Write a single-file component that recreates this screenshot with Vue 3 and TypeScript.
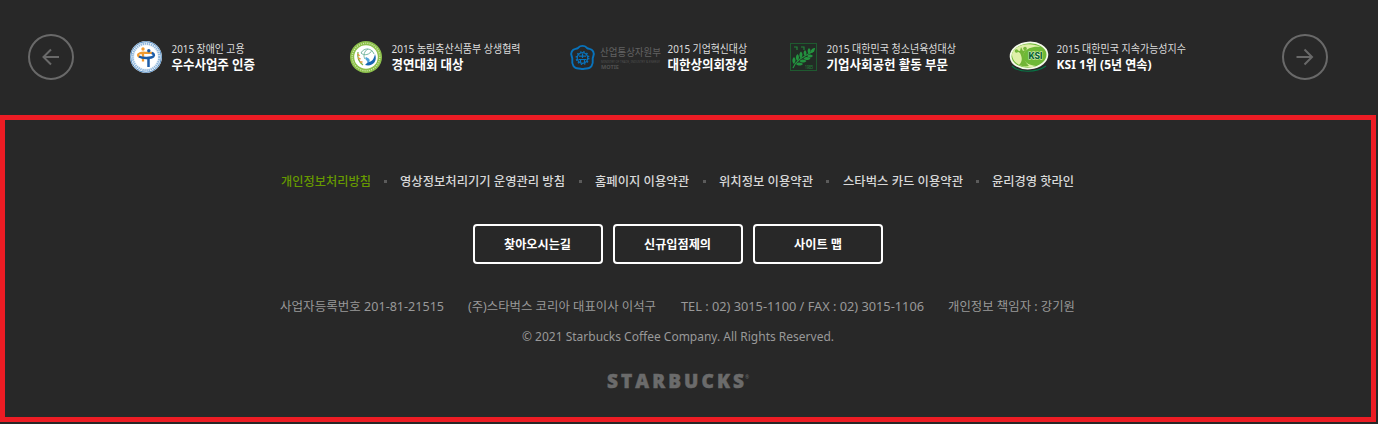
<script setup lang="ts">
interface Award {
  icon: string
  textX: number
  small: string
  smallWidth: number
  big: string
  bigWidth: number
}
interface Line {
  text: string
  width: number
  green?: boolean
}

const awards: Award[] = [
  { icon: 'work', textX: 41.5, small: '2015 장애인 고용', smallWidth: 73, big: '우수사업주 인증', bigWidth: 83.5 },
  { icon: 'farm', textX: 41.5, small: '2015 농림축산식품부 상생협력', smallWidth: 129, big: '경연대회 대상', bigWidth: 72 },
  { icon: 'motie', textX: 97.5, small: '2015 기업혁신대상', smallWidth: 79.5, big: '대한상의회장상', bigWidth: 80.5 },
  { icon: 'youth', textX: 36.5, small: '2015 대한민국 청소년육성대상', smallWidth: 129.5, big: '기업사회공헌 활동 부문', bigWidth: 121.5 },
  { icon: 'ksi', textX: 46.5, small: '2015 대한민국 지속가능성지수', smallWidth: 129.5, big: 'KSI 1위 (5년 연속)', bigWidth: 95 },
]
const links: Line[] = [
  { text: '개인정보처리방침', width: 90, green: true },
  { text: '영상정보처리기기 운영관리 방침', width: 165 },
  { text: '홈페이지 이용약관', width: 94 },
  { text: '위치정보 이용약관', width: 94 },
  { text: '스타벅스 카드 이용약관', width: 120 },
  { text: '윤리경영 핫라인', width: 82 },
]
const buttons: Line[] = [
  { text: '찾아오시는길', width: 67 },
  { text: '신규입점제의', width: 67 },
  { text: '사이트 맵', width: 48 },
]
const company: Line[] = [
  { text: '사업자등록번호 201-81-21515', width: 164 },
  { text: '(주)스타벅스 코리아 대표이사 이석구', width: 188 },
  { text: 'TEL : 02) 3015-1100 / FAX : 02) 3015-1106', width: 243 },
  { text: '개인정보 책임자 : 강기원', width: 127 },
]
const copyright: Line = { text: '© 2021 Starbucks Coffee Company. All Rights Reserved.', width: 312 }
</script>

<template>
  <div class="page">
    <section class="awards">
      <button class="arrow" aria-label="이전">
        <svg width="46" height="46" viewBox="0 0 46 46">
          <circle cx="23" cy="23" r="22" />
          <path d="M31 23H16M23 15.500l-7.500 7.500 7.500 7.500" />
        </svg>
      </button>
      <div class="award-list">
        <svg v-for="a in awards" :key="a.icon" class="award" width="220" height="46" viewBox="0 0 220 46">
          <g v-if="a.icon === 'work'">
            <circle cx="16" cy="23" r="16" fill="#f4f8fb" />
            <circle cx="16" cy="23" r="13.300" fill="none" stroke="#8fb6dc" stroke-width="2.200" stroke-dasharray="1.400 .7" />
            <circle cx="16" cy="23" r="15.400" fill="none" stroke="#3577b8" stroke-width=".8" />
            <circle cx="16" cy="23" r="11.200" fill="#fff" />
            <circle cx="13" cy="15" r="1.700" fill="#f29a2e" />
            <path d="M15 18.800c-4-.3-7 .8-7 2.200 0 .8.800 1.600 2 2M15 18.800h7M13 19v8.500" fill="none" stroke="#f29a2e" stroke-width="2.300" />
            <circle cx="18.800" cy="16.800" r="1.700" fill="#1c5ca8" />
            <path d="M9 22.500c3.500 2 12.500 1.800 14.400-.2 1.200-1.400.2-2.800-1.700-3.300M18.500 23v10" fill="none" stroke="#1c5ca8" stroke-width="2.500" />
          </g>
          <g v-else-if="a.icon === 'farm'">
            <circle cx="16" cy="23" r="16" fill="#8cc04b" />
            <circle cx="16" cy="23" r="13.800" fill="none" stroke="#d5e9b2" stroke-width="1.300" stroke-dasharray="1 1.200" />
            <circle cx="16" cy="23" r="11.800" fill="#fff" />
            <path d="M11 19c3-6 11-5 13 1M11 19c3 3 9 2 11-3M15 25c-2-3-1-8 3-10" fill="none" stroke="#76b8a1" stroke-width="1" />
            <path d="M25 20c3 8-3 13-10 11l3-3c4 0 6-3 7-8z" fill="#1767b2" />
            <path d="M16 23c4 2 5 3 2 6-1-3-4-4-2-6z" fill="#52a5d9" />
            <path d="M8 18c-1 6 1 10 5 13" fill="none" stroke="#79b33f" stroke-width="1.200" />
            <path d="M7.500 20l2 2M8 24l2.500 1M10 28l2.500 0" stroke="#df9a43" stroke-width="1.500" />
          </g>
          <g v-else-if="a.icon === 'motie'">
            <path d="M8.300 13.700C10.500 11.300 14.500 11.300 16.700 13.700C17.700 14.600 18.300 14.700 19.500 14.900C23 15.500 24.500 19 23.400 22C22.700 23.600 22.500 24.300 22.700 26C23.400 30.500 21 34.500 16.700 34.500C15 34.400 14 35 12.500 35C11 35 10 34.400 8.300 34.500C4 34.500 1.600 30.500 2.300 26C2.500 24.300 2.300 23.600 1.600 22C.5 19 2 15.500 5.500 14.900C6.700 14.700 7.300 14.600 8.300 13.700Z" fill="none" stroke="#0873bc" stroke-width="1.900" />
            <circle cx="12.500" cy="24" r="5.300" fill="none" stroke="#0873bc" stroke-width="1.200" />
            <circle cx="12.500" cy="24" r="6.300" fill="none" stroke="#0873bc" stroke-width="1.300" stroke-dasharray="1.500 1.800" />
            <path d="M9 22.200h7M12.500 19.500v4.500M8.500 25.500h8M10.500 25.500v3M14.500 25.500v3" fill="none" stroke="#0873bc" stroke-width="1.200" />
            <text x="30" y="22" class="ministry" textLength="61" lengthAdjust="spacingAndGlyphs">산업통상자원부</text>
            <text x="31" y="28.500" class="tiny" textLength="59" lengthAdjust="spacingAndGlyphs">MINISTRY OF TRADE, INDUSTRY &amp; ENERGY</text>
            <text x="31" y="34.500" class="motie" textLength="18" lengthAdjust="spacingAndGlyphs">MOTIE</text>
          </g>
          <g v-else-if="a.icon === 'youth'">
            <rect x=".5" y="9.500" width="26" height="27" fill="#222b25" stroke="#1f5a30" />
            <path d="M3 34c3-8 10-11 21-17" fill="none" stroke="#23933f" stroke-width="1.200" />
            <g fill="#23933f">
              <path d="M4 30c-3-3-1-6 0-7 2 2 2 4 0 7zM7.500 27c-3-3-1-6 0-7 2 2 2 4 0 7zM11 24.500c-3-3-1-6 0-7 2 2 2 4 0 7zM15 22c-2.500-3-1-5 0-6 2 2 2 4 0 6zM19 20c-2.500-3-1-5 0-6 2 2 2 3 0 6z" />
              <path d="M6 30c3-3 6-1 7 0-2 2-5 2-7 0zM9.500 27c3-3 6-1 7 0-2 2-5 2-7 0zM13.500 24.500c3-3 6-1 7 0-2 2-5 2-7 0zM17 22c3-3 5-1 6 0-2 2-4 2-6 0zM20 19c1-4 3-5 5-5 0 3-2 5-5 5z" />
            </g>
            <path d="M4 13h3v3M11 13h3v3" fill="none" stroke="#23833b" stroke-width="1.200" />
            <text x="15" y="34.500" class="year" textLength="8" lengthAdjust="spacingAndGlyphs">1985</text>
          </g>
          <g v-else>
            <path d="M2 32c7 7 24 7 34 0" fill="none" stroke="#087345" stroke-width="1.200" />
            <ellipse cx="19" cy="21.500" rx="18.400" ry="13" fill="#6eb936" stroke="#f5fae9" stroke-width="1.800" transform="rotate(-5 19 21.500)" />
            <path d="M2 20C4 11 19 7 31 13c-8-1-14 1-17 6-3 6 2 12 12 13-9 4-24-1-24-12z" fill="#dff0a9" />
            <path d="M9 31c4-4 3-8 1-12l-5-3 5 1 1-4 2 4 4-2-3 4c-1 5 1 9 5 13-4 1-7 0-10-1z" fill="#72b536" />
            <circle cx="6.500" cy="17" r="1.800" fill="#76b83b" />
            <circle cx="15" cy="14.500" r="1.800" fill="#76b83b" />
            <text x="18.500" y="24.800" class="ksi" textLength="14" lengthAdjust="spacingAndGlyphs">KSI</text>
          </g>
          <text :x="a.textX" y="19" class="small" :textLength="a.smallWidth" lengthAdjust="spacingAndGlyphs">{{ a.small }}</text>
          <text :x="a.textX" y="35" class="big" :textLength="a.bigWidth" lengthAdjust="spacingAndGlyphs">{{ a.big }}</text>
        </svg>
      </div>
      <button class="arrow" aria-label="다음">
        <svg width="46" height="46" viewBox="0 0 46 46">
          <circle cx="23" cy="23" r="22" />
          <path d="M14.500 23H30M22.500 15.500l7.500 7.500-7.500 7.500" />
        </svg>
      </button>
    </section>

    <footer class="footer">
      <nav class="links">
        <template v-for="(l, i) in links" :key="l.text">
          <i v-if="i" class="dot"></i>
          <svg :width="l.width" height="20" :class="['link', { green: l.green }]">
            <text x="0" y="15" :textLength="l.width" lengthAdjust="spacingAndGlyphs">{{ l.text }}</text>
          </svg>
        </template>
      </nav>
      <div class="buttons">
        <button v-for="b in buttons" :key="b.text" class="btn">
          <svg :width="b.width" height="20">
            <text x="0" y="15" :textLength="b.width" lengthAdjust="spacingAndGlyphs">{{ b.text }}</text>
          </svg>
        </button>
      </div>
      <div class="company">
        <svg v-for="c in company" :key="c.text" :width="c.width" height="20">
          <text x="0" y="15" :textLength="c.width" lengthAdjust="spacingAndGlyphs">{{ c.text }}</text>
        </svg>
      </div>
      <div class="copyright">
        <svg :width="copyright.width" height="20">
          <text x="0" y="15" :textLength="copyright.width" lengthAdjust="spacingAndGlyphs">{{ copyright.text }}</text>
        </svg>
      </div>
      <svg class="brand" width="142" height="20">
        <text x="0" y="16" class="word" textLength="137" lengthAdjust="spacing">STARBUCKS</text>
        <text x="138" y="7" class="reg">®</text>
      </svg>
    </footer>
  </div>
</template>

<style>
body {
  margin: 0;
  background: #282828;
}
</style>

<style scoped>
.page {
  width: 1378px;
  height: 424px;
  overflow: hidden;
  background: #282828;
  font-family: 'Noto Sans', 'Noto Sans CJK KR', sans-serif;
}
svg {
  display: block;
  overflow: visible;
}
button {
  margin: 0;
  padding: 0;
  background: none;
  border: 0;
  font: inherit;
}
.awards {
  box-sizing: border-box;
  height: 115px;
  padding: 34px 50px 0 28px;
  display: flex;
  justify-content: space-between;
}
.arrow {
  width: 46px;
  height: 46px;
}
.arrow svg {
  fill: none;
  stroke: #696969;
  stroke-width: 2;
}
.award-list {
  display: flex;
  width: 1100px;
  margin-right: 52px;
  margin-left: 56px;
  flex: none;
}
.small {
  font-size: 11px;
  fill: #ddd;
}
.big {
  font-size: 13px;
  font-weight: 700;
  fill: #fff;
}
.ministry {
  font-size: 10.500px;
  fill: #626262;
}
.tiny {
  font-size: 3.500px;
  fill: #505050;
}
.motie {
  font-size: 6px;
  font-weight: 700;
  fill: #505050;
}
.year {
  font-size: 5px;
  fill: #23933f;
}
.ksi {
  font-family: Inter, sans-serif;
  font-size: 9px;
  font-weight: 800;
  fill: #0a6338;
  stroke: #e8f5c8;
  stroke-width: 1px;
  paint-order: stroke;
}
.footer {
  box-sizing: border-box;
  width: 1376px;
  height: 307px;
  border: 5px solid #ed1c24;
  display: flex;
  flex-direction: column;
  align-items: center;
  padding: 51px 21px 0 0;
}
.links {
  display: flex;
  align-items: center;
  gap: 13.400px;
  font-size: 12px;
  font-weight: 500;
}
.link {
  fill: #d8d8d8;
}
.link.green {
  fill: #669900;
}
.dot {
  width: 3px;
  height: 3px;
  background: #5b5b5b;
}
.buttons {
  display: flex;
  gap: 10px;
  margin-top: 33px;
}
.btn {
  box-sizing: border-box;
  width: 130px;
  height: 40px;
  border: 2px solid #fff;
  border-radius: 4px;
  display: flex;
  align-items: center;
  justify-content: center;
  font-size: 12px;
  font-weight: 700;
  fill: #fff;
}
.company {
  display: flex;
  gap: 24.300px;
  margin-top: 32px;
  font-size: 12px;
  fill: #999;
}
.copyright {
  margin-top: 10px;
  font-size: 12px;
  fill: #999;
}
.brand {
  margin-top: 26px;
}
.word {
  font-family: 'Open Sans', sans-serif;
  font-size: 19px;
  font-weight: 800;
  fill: #6b6b6b;
  stroke: #6b6b6b;
  stroke-width: 0.500px;
}
.reg {
  font-size: 5px;
  fill: #6b6b6b;
}
</style>
